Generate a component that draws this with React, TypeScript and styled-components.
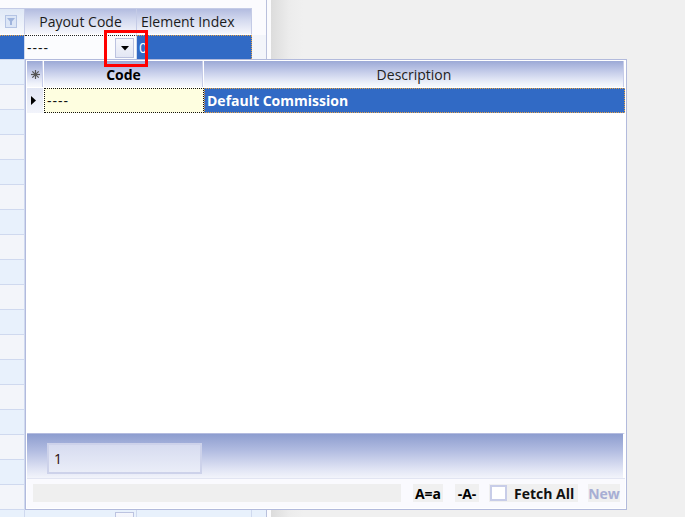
import React from "react";
import styled, { createGlobalStyle } from "styled-components";

const GlobalStyle = createGlobalStyle`
  html, body {
    margin: 0;
    padding: 0;
  }
  body {
    width: 685px;
    height: 517px;
    overflow: hidden;
    background: #f0f0f0;
    font-family: "Open Sans", "Noto Sans", sans-serif;
    font-size: 14px;
    color: #111;
  }
`;

const Screen = styled.div`
  position: relative;
  display: flex;
  width: 685px;
  height: 517px;
  overflow: hidden;
`;

const GridPanel = styled.div`
  width: 267px;
  flex-shrink: 0;
  display: flex;
  flex-direction: column;
  padding-top: 8px;
  box-sizing: border-box;
  background: #fbfbfe;
  border-right: 1px solid #b9c0dc;
  overflow: hidden;
`;

const Gutter = styled.div`
  width: 4px;
  flex-shrink: 0;
  background: #fbfbfd;
`;

const Backdrop = styled.div`
  flex: 1;
  background: linear-gradient(to right, #dcdcdc 0px, #ececec 18px, #f0f0f0 32px);
`;

const COLS = "25px 112px 115px";

const HeaderRow = styled.div`
  display: grid;
  grid-template-columns: ${COLS};
  height: 27px;
  flex-shrink: 0;
  box-sizing: border-box;
`;

const HeaderCell = styled.div<{ $light?: boolean; $left?: boolean }>`
  display: flex;
  align-items: center;
  justify-content: ${(p) => (p.$left ? "flex-start" : "center")};
  padding-left: ${(p) => (p.$left ? "4px" : "0")};
  box-sizing: border-box;
  border: 1px solid #c4cbe6;
  border-left: none;
  border-bottom: 1px solid #fff;
  background: ${(p) =>
    p.$light
      ? "linear-gradient(to bottom, #dfe8f6, #f7f9fd)"
      : "linear-gradient(to bottom, #b3bce0 0%, #d4daef 45%, #f6f7fc 100%)"};
  color: #1b1b1b;
  white-space: nowrap;
  overflow: hidden;
`;

const FilterBox = styled.div`
  width: 12px;
  height: 13px;
  margin-left: -2px;
  box-sizing: border-box;
  border: 1px solid #b4c4e4;
  background: #dce6f6;
  display: flex;
  align-items: center;
  justify-content: center;
`;

const Row = styled.div<{ $alt: boolean }>`
  display: grid;
  grid-template-columns: ${COLS};
  height: 25px;
  flex-shrink: 0;
  box-sizing: border-box;
  border-bottom: 1px solid #cfd9ef;
  background: ${(p) => (p.$alt ? "#e8f1fc" : "#f3f5fa")};
`;

const Cell = styled.div`
  position: relative;
  box-sizing: border-box;
  border-right: 1px solid #cfd9ef;
  display: flex;
  align-items: center;
  padding-left: 2px;
  white-space: nowrap;
`;

const SelCell = styled(Cell)<{ $edge?: boolean }>`
  background: #316ac5;
  color: #fff;
  border-top: 1px dotted #e3a24a;
  border-right: ${(p) => (p.$edge ? "1px dotted #e3a24a" : "1px solid #cfd9ef")};
`;

const EditCell = styled(Cell)`
  background: #fbfcfe;
  border-top: 1px dotted #222;
  letter-spacing: 1px;
`;

const DropButton = styled.div`
  position: absolute;
  right: 2px;
  top: 2px;
  width: 19px;
  height: 20px;
  box-sizing: border-box;
  border: 1px solid #bcc3e0;
  background: linear-gradient(to bottom, #f6f7fc, #e3e7f4);
  display: flex;
  align-items: center;
  justify-content: center;
`;

const Highlight = styled.div`
  position: absolute;
  left: 104px;
  top: 30px;
  width: 44px;
  height: 37px;
  box-sizing: border-box;
  border: 3px solid #f00;
  z-index: 3;
`;

const Popup = styled.div`
  position: absolute;
  left: 25px;
  top: 59px;
  width: 602px;
  height: 451px;
  box-sizing: border-box;
  border: 1px solid #b2badc;
  padding: 1px;
  background: #fff;
  display: flex;
  flex-direction: column;
  z-index: 2;
`;

const PCOLS = "17px 160px 1fr";

const LookupHeader = styled.div`
  display: grid;
  grid-template-columns: ${PCOLS};
  height: 27px;
  flex-shrink: 0;
`;

const LookupHeadCell = styled.div<{ $bold?: boolean }>`
  display: flex;
  align-items: center;
  justify-content: center;
  box-sizing: border-box;
  border-right: 1px solid #fff;
  border-bottom: 1px solid #fff;
  box-shadow: inset -1px 0 #c6cce8;
  background: linear-gradient(to bottom, #9ca9d6 0%, #c3cbe9 40%, #eef1fa 85%, #f8f9fd 100%);
  font-weight: ${(p) => (p.$bold ? 700 : 400)};
  color: ${(p) => (p.$bold ? "#000" : "#222")};
`;

const LookupRow = styled.div`
  display: grid;
  grid-template-columns: ${PCOLS};
  height: 25px;
  flex-shrink: 0;
`;

const Indicator = styled.div`
  display: flex;
  align-items: center;
  padding-left: 4px;
  box-sizing: border-box;
  border-right: 1px solid #fff;
  background: linear-gradient(to bottom, #e2e6f4, #f2f4fb);
`;

const CodeCell = styled.div`
  display: flex;
  align-items: center;
  padding-left: 2px;
  box-sizing: border-box;
  border: 1px dotted #111;
  background: #fefee0;
  letter-spacing: 1px;
`;

const DescCell = styled.div`
  display: flex;
  align-items: center;
  padding-left: 2px;
  box-sizing: border-box;
  border: 1px dotted #e3a24a;
  background: #316ac5;
  color: #fff;
  font-weight: 700;
`;

const EmptyArea = styled.div`
  flex: 1;
  background: #fff;
`;

const Footer = styled.div`
  height: 45px;
  flex-shrink: 0;
  box-sizing: border-box;
  border-top: 1px solid #b4bcdf;
  border-right: 2px solid #fff;
  padding: 9px 0 0 20px;
  background: linear-gradient(to bottom, #8d9dcf 0%, #b4bee2 40%, #e0e4f4 80%, #f2f4fb 100%);
`;

const CountBox = styled.div`
  width: 155px;
  height: 31px;
  box-sizing: border-box;
  border: 2px solid #cdd2ea;
  background: linear-gradient(to bottom, #d7dcf0, #eaedf8);
  display: flex;
  align-items: center;
  padding-left: 5px;
  color: #2a0a0a;
`;

const BottomBar = styled.div`
  height: 30px;
  flex-shrink: 0;
  box-sizing: border-box;
  border-top: 1px solid #e2e5f2;
  padding: 5px 0 0 6px;
  display: flex;
  align-items: flex-start;
  background: #fafafe;
`;

const SearchBox = styled.div`
  width: 368px;
  height: 18px;
  background: #efefef;
`;

const ToolLabel = styled.div<{ $w: number; $ml: number; $dim?: boolean }>`
  width: ${(p) => p.$w}px;
  margin-left: ${(p) => p.$ml}px;
  height: 18px;
  display: flex;
  align-items: center;
  justify-content: center;
  background: #f0f0f0;
  font-weight: 700;
  white-space: nowrap;
  color: ${(p) => (p.$dim ? "#a7aed4" : "#000")};
`;

const CheckGroup = styled.div`
  width: 89px;
  margin-left: 10px;
  height: 18px;
  display: flex;
  align-items: center;
  gap: 7px;
  background: #f0f0f0;
  font-weight: 700;
  white-space: nowrap;
`;

const CheckBox = styled.div`
  width: 17px;
  height: 16px;
  margin-left: 1px;
  box-sizing: border-box;
  border: 2px solid #c8cde8;
  background: #fff;
`;

const DownArrow = () => (
  <svg width="8" height="5" viewBox="0 0 8 5">
    <polygon points="0,0 8,0 4,4.5" fill="#000" />
  </svg>
);

const Funnel = () => (
  <svg width="8" height="7" viewBox="0 0 8 7">
    <polygon points="0,0 8,0 5,3.5 5,7 3,7 3,3.5" fill="#9fb4dc" />
  </svg>
);

const RowPointer = () => (
  <svg width="5" height="9" viewBox="0 0 5 9">
    <polygon points="0,0 5,4.5 0,9" fill="#000" />
  </svg>
);

const NewRowMark = () => (
  <svg width="9" height="9" viewBox="0 0 9 9">
    <g stroke="#555" strokeWidth="1.2">
      <line x1="4.5" y1="0" x2="4.5" y2="9" />
      <line x1="0" y1="4.5" x2="9" y2="4.5" />
      <line x1="1.3" y1="1.3" x2="7.7" y2="7.7" />
      <line x1="7.7" y1="1.3" x2="1.3" y2="7.7" />
    </g>
  </svg>
);

const rows = Array.from({ length: 19 }, (_, i) => i + 1);

export default function App() {
  return (
    <>
      <GlobalStyle />
      <Screen>
        <GridPanel>
          <HeaderRow>
            <HeaderCell $light>
              <FilterBox>
                <Funnel />
              </FilterBox>
            </HeaderCell>
            <HeaderCell>Payout Code</HeaderCell>
            <HeaderCell $left>Element Index</HeaderCell>
          </HeaderRow>
          <Row $alt={false}>
            <SelCell />
            <EditCell>
              ----
              <DropButton>
                <DownArrow />
              </DropButton>
            </EditCell>
            <SelCell $edge>0</SelCell>
          </Row>
          {rows.map((i) => (
            <Row key={i} $alt={i % 2 === 1}>
              <Cell />
              <Cell>
                <DropButton />
              </Cell>
              <Cell />
            </Row>
          ))}
        </GridPanel>
        <Gutter />
        <Backdrop />

        <Highlight />

        <Popup>
          <LookupHeader>
            <LookupHeadCell>
              <NewRowMark />
            </LookupHeadCell>
            <LookupHeadCell $bold>Code</LookupHeadCell>
            <LookupHeadCell>Description</LookupHeadCell>
          </LookupHeader>
          <LookupRow>
            <Indicator>
              <RowPointer />
            </Indicator>
            <CodeCell>----</CodeCell>
            <DescCell>Default Commission</DescCell>
          </LookupRow>
          <EmptyArea />
          <Footer>
            <CountBox>1</CountBox>
          </Footer>
          <BottomBar>
            <SearchBox />
            <ToolLabel $w={30} $ml={12}>
              A=a
            </ToolLabel>
            <ToolLabel $w={24} $ml={12}>
              -A-
            </ToolLabel>
            <CheckGroup>
              <CheckBox />
              Fetch All
            </CheckGroup>
            <ToolLabel $w={32} $ml={10} $dim>
              New
            </ToolLabel>
          </BottomBar>
        </Popup>
      </Screen>
    </>
  );
}
